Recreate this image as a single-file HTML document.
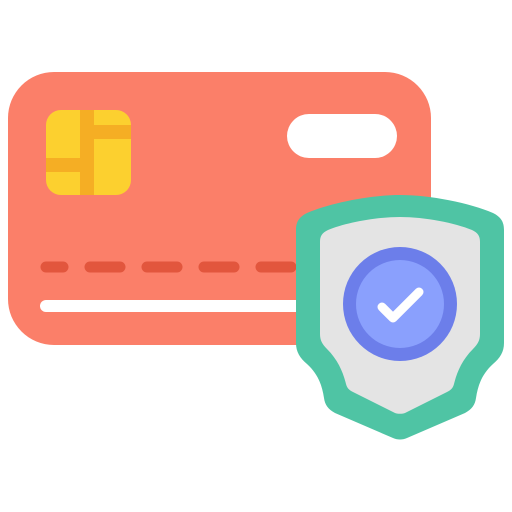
<!DOCTYPE html>
<html><head><style>html,body{margin:0;padding:0;background:#fff;width:512px;height:512px;overflow:hidden}</style></head><body>
<svg width="512" height="512" viewBox="0 0 512 512" xmlns="http://www.w3.org/2000/svg">
<rect x="8" y="72" width="423" height="273" rx="46" fill="#fb7f69"/>
<rect x="46" y="110" width="85" height="85" rx="15" fill="#fcd02f"/>
<rect x="80" y="110" width="14" height="85" fill="#f5ae24"/>
<rect x="46" y="158" width="34" height="14" fill="#f5ae24"/>
<rect x="94" y="125" width="37" height="14" fill="#f5ae24"/>
<rect x="287" y="114" width="110" height="44" rx="22" fill="#fff"/>
<g stroke="#e2563d" stroke-width="11" stroke-linecap="round">
<line x1="46" y1="267" x2="63" y2="267"/>
<line x1="90" y1="267" x2="120" y2="267"/>
<line x1="147" y1="267" x2="177" y2="267"/>
<line x1="204" y1="267" x2="234" y2="267"/>
<line x1="261" y1="267" x2="291" y2="267"/>
</g>
<line x1="46" y1="306" x2="300" y2="306" stroke="#fff" stroke-width="12" stroke-linecap="round"/>
<path d="M400 195 C370 195 330 203 307 213 C299 217 296 222 296 230 L296 343 C296 352 300 358 307 364 C318 374 322 385 324 398 C325 405 328 409 335 413 L393 438 C397 440 403 440 407 438 L465 413 C472 409 475 405 476 398 C478 385 482 374 493 364 C500 358 504 352 504 343 L504 230 C504 222 501 217 493 213 C470 203 430 195 400 195 Z" fill="#4fc4a4"/>
<path d="M400 217 C375 217 345 223 328 230 C322 233 320 236 320 242 L320 334 C320 340 322 344 327 349 C338 360 343 372 346 384 C347 388 349 390 353 392 L395 413 C398 414 402 414 405 413 L447 392 C451 390 453 388 454 384 C457 372 462 360 473 349 C478 344 480 340 480 334 L480 242 C480 236 478 233 472 230 C455 223 425 217 400 217 Z" fill="#e4e4e4"/>
<circle cx="400" cy="304" r="57" fill="#6c7eea"/>
<circle cx="400" cy="304" r="44" fill="#8aa0fd"/>
<polyline points="382,307 393,318 419,292" fill="none" stroke="#fff" stroke-width="9" stroke-linecap="round" stroke-linejoin="round"/>
</svg>
</body></html>
